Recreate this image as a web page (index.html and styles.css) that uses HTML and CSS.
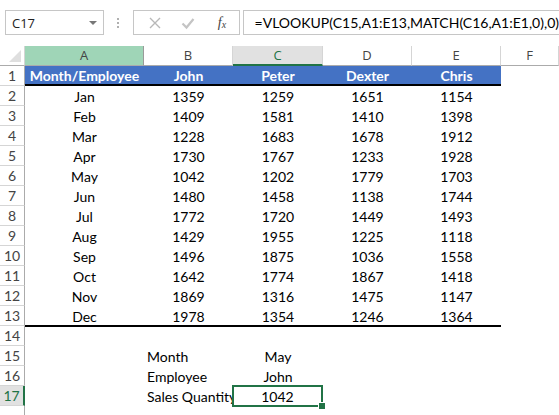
FILE: index.html
```html
<!DOCTYPE html>
<html>
<head>
<meta charset="utf-8">
<link rel="stylesheet" href="styles.css">
</head>
<body>
<div class="toolbar">
  <div class="namebox"><span class="nb-text">C17</span><span class="caret"></span></div>
  <div class="grip"><i></i><i></i><i></i></div>
  <div class="fxbox">
    <svg class="ico" width="14" height="14" viewBox="0 0 14 14"><path d="M2 2 L12 12 M12 2 L2 12" stroke="#b8b8b8" stroke-width="1.4" fill="none"/></svg>
    <svg class="ico" width="14" height="14" viewBox="0 0 14 14"><path d="M1.5 7.5 L5.5 11.5 L12.5 3" stroke="#c4c4c4" stroke-width="2.2" fill="none"/></svg>
    <span class="fx">f<sub>x</sub></span>
  </div>
  <div class="formula">=VLOOKUP(C15,A1:E13,MATCH(C16,A1:E1,0),0)</div>
</div>
<div class="sheet">
  <div class="corner"><span class="tri"></span></div>
  <div class="ch ch-sel">A</div>
  <div class="ch">B</div>
  <div class="ch ch-act">C</div>
  <div class="ch">D</div>
  <div class="ch">E</div>
  <div class="ch">F</div>

  <div class="rh">1</div>
  <div class="c hd">Month/Employee</div><div class="c hd">John</div><div class="c hd">Peter</div><div class="c hd">Dexter</div><div class="c hd">Chris</div><div class="c"></div>

  <div class="rh">2</div><div class="c">Jan</div><div class="c">1359</div><div class="c">1259</div><div class="c">1651</div><div class="c">1154</div><div class="c"></div>
  <div class="rh">3</div><div class="c">Feb</div><div class="c">1409</div><div class="c">1581</div><div class="c">1410</div><div class="c">1398</div><div class="c"></div>
  <div class="rh">4</div><div class="c">Mar</div><div class="c">1228</div><div class="c">1683</div><div class="c">1678</div><div class="c">1912</div><div class="c"></div>
  <div class="rh">5</div><div class="c">Apr</div><div class="c">1730</div><div class="c">1767</div><div class="c">1233</div><div class="c">1928</div><div class="c"></div>
  <div class="rh">6</div><div class="c">May</div><div class="c">1042</div><div class="c">1202</div><div class="c">1779</div><div class="c">1703</div><div class="c"></div>
  <div class="rh">7</div><div class="c">Jun</div><div class="c">1480</div><div class="c">1458</div><div class="c">1138</div><div class="c">1744</div><div class="c"></div>
  <div class="rh">8</div><div class="c">Jul</div><div class="c">1772</div><div class="c">1720</div><div class="c">1449</div><div class="c">1493</div><div class="c"></div>
  <div class="rh">9</div><div class="c">Aug</div><div class="c">1429</div><div class="c">1955</div><div class="c">1225</div><div class="c">1118</div><div class="c"></div>
  <div class="rh">10</div><div class="c">Sep</div><div class="c">1496</div><div class="c">1875</div><div class="c">1036</div><div class="c">1558</div><div class="c"></div>
  <div class="rh">11</div><div class="c">Oct</div><div class="c">1642</div><div class="c">1774</div><div class="c">1867</div><div class="c">1418</div><div class="c"></div>
  <div class="rh">12</div><div class="c">Nov</div><div class="c">1869</div><div class="c">1316</div><div class="c">1475</div><div class="c">1147</div><div class="c"></div>
  <div class="rh">13</div><div class="c last">Dec</div><div class="c last">1978</div><div class="c last">1354</div><div class="c last">1246</div><div class="c last">1364</div><div class="c"></div>
  <div class="rh">14</div><div class="c"></div><div class="c"></div><div class="c"></div><div class="c"></div><div class="c"></div><div class="c"></div>
  <div class="rh">15</div><div class="c"></div><div class="c left">Month</div><div class="c">May</div><div class="c"></div><div class="c"></div><div class="c"></div>
  <div class="rh">16</div><div class="c"></div><div class="c left">Employee</div><div class="c">John</div><div class="c"></div><div class="c"></div><div class="c"></div>
  <div class="rh rh-act">17</div><div class="c"></div><div class="c left">Sales Quantity</div><div class="c active">1042<span class="handle"></span></div><div class="c"></div><div class="c"></div><div class="c"></div>
  <div class="rh"></div><div class="c"></div><div class="c"></div><div class="c"></div><div class="c"></div><div class="c"></div><div class="c"></div>
</div>
</body>
</html>
```

FILE: styles.css
```css
html, body {
  margin: 0;
  padding: 0;
  background: #ffffff;
  overflow: hidden;
}
body {
  width: 559px;
  height: 415px;
  font-family: Lato, "Open Sans", sans-serif;
  color: #000;
}
.toolbar {
  display: flex;
  height: 46px;
  padding: 10px 0 0 5px;
  box-sizing: border-box;
  align-items: flex-start;
}
.namebox {
  width: 102px;
  height: 25px;
  box-sizing: border-box;
  border: 1px solid #c6c6c6;
  display: flex;
  align-items: center;
  justify-content: space-between;
  padding: 0 6px 0 6px;
  font-family: "Open Sans", sans-serif;
  font-size: 13px;
  color: #222;
}
.caret {
  width: 0;
  height: 0;
  border-left: 4px solid transparent;
  border-right: 4px solid transparent;
  border-top: 4px solid #777;
}
.grip {
  width: 30px;
  height: 25px;
  display: flex;
  flex-direction: column;
  align-items: center;
  justify-content: center;
  gap: 2px;
}
.grip i {
  display: block;
  width: 2px;
  height: 2px;
  background: #b0b0b0;
}
.fxbox {
  width: 110px;
  height: 25px;
  box-sizing: border-box;
  border: 1px solid #c6c6c6;
  display: flex;
  align-items: center;
  padding: 0 0 0 14px;
  gap: 19px;
}
.fx {
  font-family: "Liberation Serif", serif;
  font-style: italic;
  font-size: 14px;
  color: #444;
  margin-left: 4px;
}
.fx sub {
  font-size: 10px;
  vertical-align: -1px;
}
.formula {
  flex: 1;
  height: 25px;
  box-sizing: border-box;
  border: 1px solid #c6c6c6;
  border-right: none;
  margin-left: 3px;
  padding: 0 0 0 11px;
  line-height: 23px;
  font-size: 14px;
  color: #000;
  white-space: nowrap;
}
.sheet {
  display: grid;
  grid-template-columns: 25px 119px 89px 90px 89px 89px 1fr;
  grid-auto-rows: 20px;
  font-size: 14px;
}
.corner {
  position: relative;
  border-right: 1px solid #d5d5d5;
  border-bottom: 1px solid #ababab;
  box-sizing: border-box;
}
.tri {
  position: absolute;
  right: 3px;
  bottom: 3px;
  width: 0;
  height: 0;
  border-left: 12px solid transparent;
  border-bottom: 12px solid #dfdfdf;
}
.ch {
  box-sizing: border-box;
  border-right: 1px solid #d5d5d5;
  border-bottom: 1px solid #ababab;
  text-align: center;
  line-height: 19px;
  font-family: "Open Sans", sans-serif;
  font-size: 13px;
  color: #444;
}
.ch-sel {
  background: #9fd5b7;
  border-right-color: #9a9a9a;
}
.ch-act {
  background: #e1e1e1;
  border-bottom: 2px solid #217346;
  color: #217346;
}
.rh {
  box-sizing: border-box;
  border-right: 1px solid #ababab;
  border-bottom: 1px solid #d5d5d5;
  text-align: center;
  line-height: 20px;
  font-size: 14px;
  color: #444;
}
.rh-act {
  background: #e1e1e1;
  border-right: 2px solid #217346;
  color: #217346;
}
.c {
  box-sizing: border-box;
  text-align: center;
  line-height: 22px;
  white-space: nowrap;
  overflow: hidden;
}
.c.left {
  text-align: left;
  padding-left: 3px;
  overflow: visible;
}
.hd {
  background: #4472c4;
  color: #fff;
  font-weight: bold;
  border-bottom: 2px solid #000;
  line-height: 19px;
}
.last {
  border-bottom: 2px solid #000;
  margin-bottom: -1px;
}
.active {
  position: relative;
  overflow: visible;
  background: #fff;
  border: 2px solid #217346;
  margin: -1px 0 -1px -1px;
  line-height: 19px;
}
.handle {
  position: absolute;
  right: -4px;
  bottom: -4px;
  width: 6px;
  height: 6px;
  background: #217346;
  border: 1px solid #fff;
  box-sizing: content-box;
  margin: -1px;
}
```
